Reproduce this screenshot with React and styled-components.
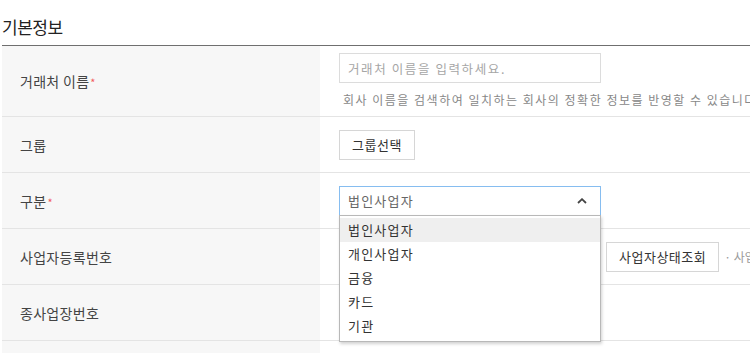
import React from "react";
import styled, { createGlobalStyle } from "styled-components";

const GlobalStyle = createGlobalStyle`
  html, body {
    margin: 0;
    padding: 0;
    background: #ffffff;
    overflow: hidden;
  }
  body {
    font-family: "Noto Sans CJK KR", "Noto Sans", sans-serif;
    color: #333333;
  }
`;

const Page = styled.div`
  width: 1000px;
  padding-left: 2px;
`;

const Title = styled.h2`
  margin: 0;
  padding: 15px 0 6px;
  font-size: 17px;
  line-height: 24px;
  font-weight: 400;
  color: #222222;
  letter-spacing: -0.5px;
`;

const Table = styled.div`
  border-top: 1px solid #6f6f6f;
`;

const Row = styled.div`
  display: grid;
  grid-template-columns: 318px 1fr;
  min-height: ${(p) => p.$height || 55}px;
  border-bottom: 1px solid #e4e4e4;
`;

const Label = styled.div`
  display: flex;
  align-items: center;
  padding-left: 18px;
  background: #f7f7f7;
  font-size: 14px;
  letter-spacing: 0.3px;
  color: #444444;
`;

const Required = styled.span`
  color: #f25c5c;
  font-size: 11px;
  margin-left: 1px;
  transform: translateY(1px);
`;

const Cell = styled.div`
  display: flex;
  flex-direction: ${(p) => (p.$column ? "column" : "row")};
  align-items: ${(p) => (p.$column ? "flex-start" : "center")};
  gap: ${(p) => (p.$column ? 9 : 5)}px;
  padding: ${(p) => (p.$column ? "7px 0 0 19px" : "0 0 0 19px")};
`;

const TextInput = styled.input`
  box-sizing: border-box;
  width: 262px;
  height: 30px;
  border: 1px solid #dcdcdc;
  padding: 0 8px;
  font-family: inherit;
  font-size: 12.5px;
  letter-spacing: 1.6px;
  color: #333333;
  outline: none;

  &::placeholder {
    color: #a6a6a6;
  }
`;

const Help = styled.p`
  margin: 0 0 0 4px;
  font-size: 12px;
  line-height: 16px;
  letter-spacing: 1.5px;
  color: #888888;
  white-space: nowrap;
`;

const Button = styled.button`
  box-sizing: border-box;
  height: 30px;
  padding: 0 ${(p) => p.$pad || 12}px;
  border: 1px solid #d6d6d6;
  background: #ffffff;
  font-family: inherit;
  font-size: 13px;
  letter-spacing: ${(p) => p.$spacing || "0.5px"};
  color: #333333;
  cursor: pointer;
`;

const Note = styled.span`
  font-size: 12px;
  color: #999999;
  white-space: nowrap;
`;

const SelectWrap = styled.div`
  position: relative;
  width: 262px;
`;

const SelectBox = styled.div`
  box-sizing: border-box;
  height: 30px;
  display: flex;
  align-items: center;
  justify-content: space-between;
  padding: 0 13px 0 8px;
  border: 1px solid #86bdf0;
  font-size: 13px;
  letter-spacing: 1.2px;
  color: #666666;
`;

const Menu = styled.ul`
  position: absolute;
  top: 29px;
  left: 0;
  right: 0;
  z-index: 10;
  margin: 0;
  padding: 2px 0 3px;
  list-style: none;
  background: #ffffff;
  border: 1px solid #b8b8b8;
  box-shadow: 1px 2px 3px rgba(0, 0, 0, 0.18);
`;

const MenuItem = styled.li`
  height: 24px;
  line-height: 24px;
  padding-left: 8px;
  font-size: 13px;
  letter-spacing: 1.2px;
  color: #333333;
  background: ${(p) => (p.$active ? "#efefef" : "transparent")};
`;

const Chevron = () => (
  <svg width="10" height="6" viewBox="0 0 10 6">
    <path d="M1 5 L5 1.2 L9 5" fill="none" stroke="#444" strokeWidth="1.8" />
  </svg>
);

const options = ["법인사업자", "개인사업자", "금융", "카드", "기관"];

export default function App() {
  return (
    <>
      <GlobalStyle />
      <Page>
        <Title>기본정보</Title>
        <Table>
          <Row $height={70}>
            <Label>
              거래처 이름<Required>*</Required>
            </Label>
            <Cell $column>
              <TextInput placeholder="거래처 이름을 입력하세요." />
              <Help>
                회사 이름을 검색하여 일치하는 회사의 정확한 정보를 반영할 수 있습니다.
              </Help>
            </Cell>
          </Row>
          <Row>
            <Label>그룹</Label>
            <Cell>
              <Button>그룹선택</Button>
            </Cell>
          </Row>
          <Row>
            <Label>
              구분<Required>*</Required>
            </Label>
            <Cell>
              <SelectWrap>
                <SelectBox>
                  법인사업자
                  <Chevron />
                </SelectBox>
                <Menu>
                  {options.map((o, i) => (
                    <MenuItem key={o} $active={i === 0}>
                      {o}
                    </MenuItem>
                  ))}
                </Menu>
              </SelectWrap>
            </Cell>
          </Row>
          <Row>
            <Label>사업자등록번호</Label>
            <Cell>
              <TextInput />
              <Button>사업자상태조회</Button>
              <Note>· 사업자등록번호를 입력하세요.</Note>
            </Cell>
          </Row>
          <Row>
            <Label>종사업장번호</Label>
            <Cell>
              <TextInput />
            </Cell>
          </Row>
          <Row>
            <Label />
            <Cell />
          </Row>
        </Table>
      </Page>
    </>
  );
}
